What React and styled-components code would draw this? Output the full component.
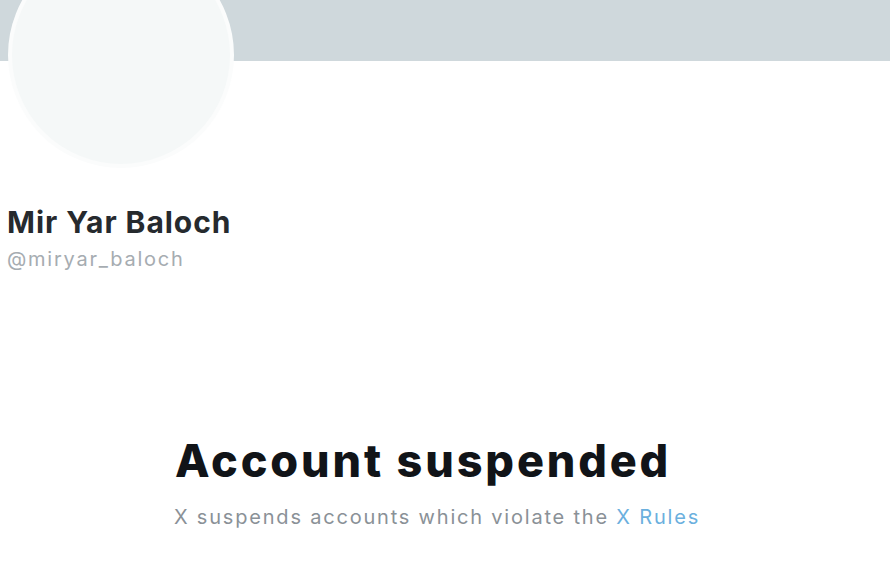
import React from "react";
import styled, { createGlobalStyle } from "styled-components";

const Global = createGlobalStyle`
  html, body { margin: 0; padding: 0; background: #ffffff; }
  body { font-family: Inter, "Liberation Sans", sans-serif; width: 890px; height: 570px; overflow: hidden; }
`;

const Page = styled.div`
  width: 890px;
  height: 570px;
  background: #fff;
  display: flex;
  flex-direction: column;
`;

const Banner = styled.div`
  height: 61px;
  background: #cfd8dc;
  flex-shrink: 0;
`;

const ProfileHead = styled.div`
  padding: 0 0 0 7px;
  display: flex;
  flex-direction: column;
`;

const Avatar = styled.div`
  width: 218px;
  height: 218px;
  margin-top: -119px;
  margin-left: 1px;
  border-radius: 50%;
  background: #f5f8f8;
  border: 4px solid #fbfcfc;
`;

const Name = styled.div`
  margin-top: 36px;
  font-size: 30px;
  font-weight: 700;
  color: #262a2e;
  letter-spacing: 0.95px;
  line-height: 36px;
`;

const Handle = styled.div`
  margin-top: 7px;
  font-size: 20px;
  color: #a6acb1;
  letter-spacing: 1.75px;
  line-height: 24px;
`;

const Empty = styled.div`
  margin-top: 164px;
  padding-left: 175px;
  display: flex;
  flex-direction: column;
  align-items: flex-start;
`;

const Title = styled.h1`
  margin: 0;
  font-size: 45px;
  font-weight: 800;
  color: #111418;
  line-height: 52px;
  letter-spacing: 2.85px;
`;

const Sub = styled.p`
  margin: 18px 0 0 -1px;
  font-size: 20px;
  color: #8a9197;
  line-height: 24px;
  letter-spacing: 1.8px;
`;

const RuleLink = styled.a`
  color: #6bb0de;
  text-decoration: none;
`;

export default function App() {
  return (
    <Page>
      <Global />
      <Banner />
      <ProfileHead>
        <Avatar />
        <Name>Mir Yar Baloch</Name>
        <Handle>@miryar_baloch</Handle>
      </ProfileHead>
      <Empty>
        <Title>Account suspended</Title>
        <Sub>
          X suspends accounts which violate the <RuleLink href="#">X Rules</RuleLink>
        </Sub>
      </Empty>
    </Page>
  );
}
